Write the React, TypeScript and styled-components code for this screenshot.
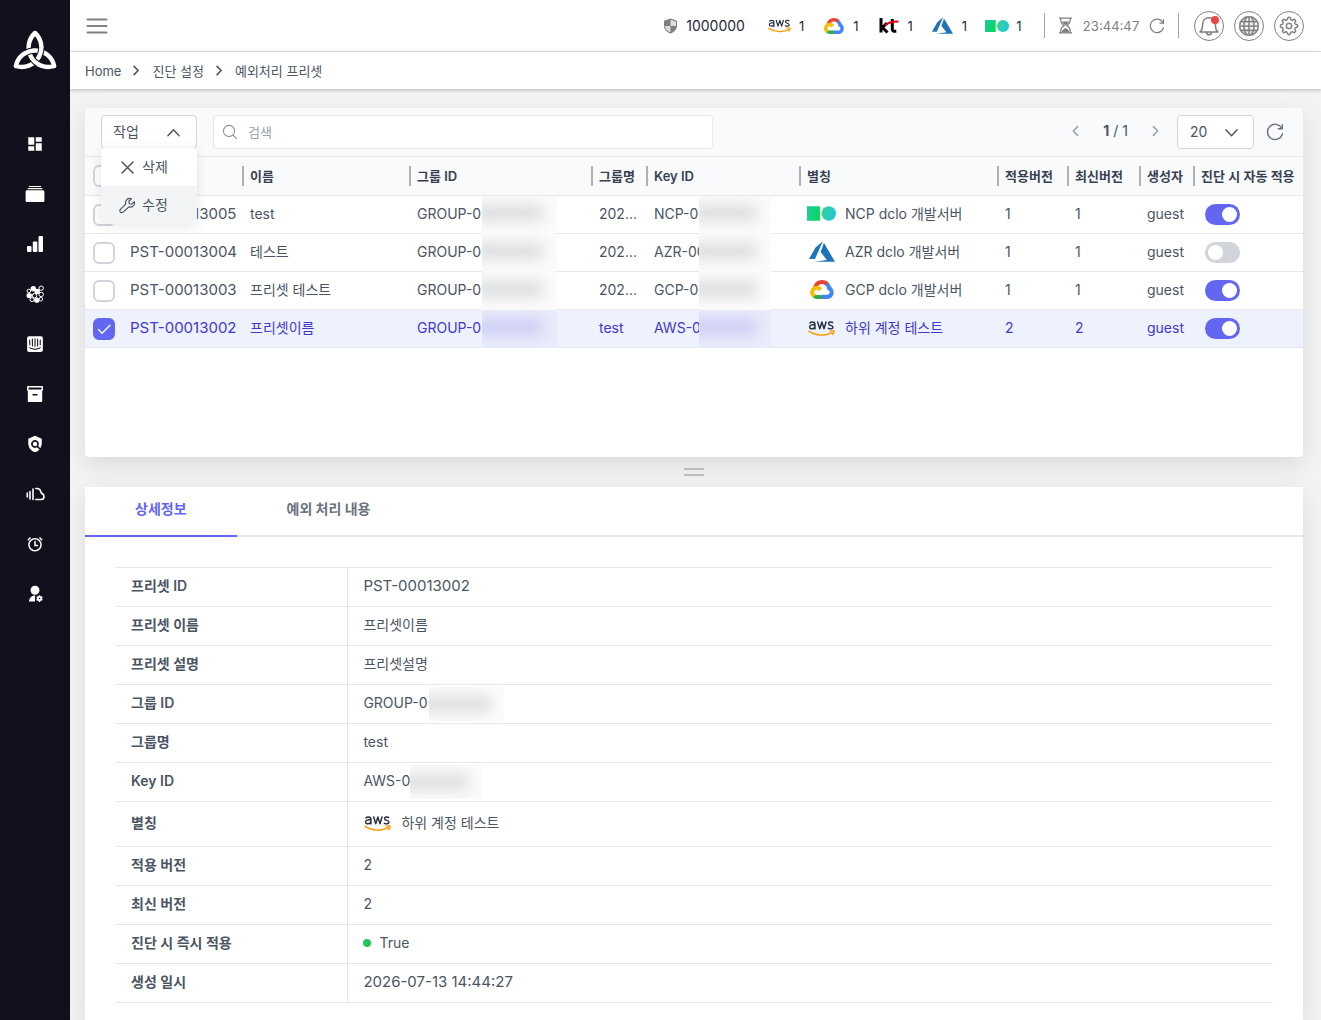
import React from "react";
import styled, { createGlobalStyle, css } from "styled-components";
import { MdDashboard, MdPolicy } from "react-icons/md";
import { IoIosAlbums } from "react-icons/io";
import { RiUserSettingsFill, RiAlarmLine } from "react-icons/ri";
import { FaIntercom } from "react-icons/fa";
import { BsGlobe } from "react-icons/bs";
import { GoGear } from "react-icons/go";

const Global = createGlobalStyle`
  *, *::before, *::after { box-sizing: border-box; }
  body {
    margin: 0;
    background: #f3f3f3;
    color: #4b5563;
    font-family: Inter, "Noto Sans CJK KR", sans-serif;
    font-size: 14px;
    line-height: 20px;
  }
  button, input, select { font: inherit; color: inherit; }
  button { cursor: pointer; }
`;

/* ---------- layout ---------- */

const Shell = styled.div`
  display: flex;
  min-height: 100vh;
`;

const Sidebar = styled.aside`
  flex: 0 0 70px;
  background: #11101d;
  color: #fff;
  display: flex;
  flex-direction: column;
  align-items: center;
  padding-top: 27px;
  gap: 46px;
`;

const Menu = styled.nav`
  display: flex;
  flex-direction: column;
`;

const MenuLink = styled.a`
  display: grid;
  place-items: center;
  width: 50px;
  height: 50px;
  color: #fff;
`;

const Main = styled.main`
  flex: 1;
  min-width: 0;
  display: flex;
  flex-direction: column;
`;

const TopBar = styled.header`
  height: 52px;
  background: #fff;
  border-bottom: 1px solid #e5e7eb;
  display: flex;
  align-items: center;
  justify-content: space-between;
  padding: 0 17px 0 15px;
`;

const PlainButton = styled.button`
  display: grid;
  place-items: center;
  border: 0;
  padding: 0;
  background: none;
  color: ${(p) => p.color || "#6b7280"};
`;

const TopRight = styled.div`
  display: flex;
  align-items: center;
  color: #1f2937;
`;

const Credits = styled.div`
  display: flex;
  align-items: center;
  gap: 8px;
  margin-right: 23px;
`;

const Providers = styled.ul`
  display: flex;
  gap: 18px;
  list-style: none;
  margin: 0;
  padding: 0;
  font-size: 13px;
`;

const Provider = styled.li`
  display: flex;
  align-items: center;
  gap: 7px;
`;

const IconSlot = styled.span<{ $w: number }>`
  display: flex;
  align-items: center;
  justify-content: center;
  width: ${(p) => p.$w}px;
  height: 20px;
`;

const Session = styled.div`
  display: flex;
  align-items: center;
  gap: 9px;
  height: 25px;
  margin: 0 15px 0 23px;
  padding: 0 13px;
  border: solid #9ca3af;
  border-width: 0 1px;
  color: #808080;
  font-size: 13px;
  font-variant-numeric: tabular-nums;
`;

const RoundButtons = styled.div`
  display: flex;
  gap: 10px;
`;

const RoundButton = styled.button`
  position: relative;
  display: grid;
  place-items: center;
  width: 30px;
  height: 30px;
  padding: 0;
  border: 1px solid #808080;
  border-radius: 50%;
  background: #fff;
  color: #808080;
`;

const Dot = styled.span`
  position: absolute;
  top: 4px;
  right: 4px;
  width: 8px;
  height: 8px;
  border-radius: 50%;
  background: #ef4444;
`;

const Crumbs = styled.nav`
  display: flex;
  align-items: center;
  gap: 9px;
  height: 37px;
  padding: 0 15px;
  background: #fff;
  box-shadow: 0 1px 4px rgba(0, 0, 0, 0.25);
  font-size: 13px;
`;

const Crumb = styled.a`
  color: #4b5563;
  text-decoration: none;
`;

const Content = styled.div`
  flex: 1;
  display: flex;
  flex-direction: column;
  padding: 19px 18px 0 15px;
`;

const Card = styled.section`
  background: #fff;
  box-shadow: 0 8px 24px rgba(0, 0, 0, 0.1);
`;

const ListCard = styled(Card)`
  min-height: 349px;
  border-radius: 0 0 4px 4px;
`;

const DetailCard = styled(Card)`
  flex: 1;
`;

const Splitter = styled.div`
  display: grid;
  place-items: center;
  height: 30px;
`;

const Grip = styled.span`
  width: 20px;
  height: 8px;
  border: solid #bdbdbd;
  border-width: 2px 0;
`;

/* ---------- toolbar ---------- */

const Toolbar = styled.div`
  display: flex;
  align-items: center;
  justify-content: space-between;
  height: 49px;
  padding: 0 19px 0 16px;
  background: #f9fafb;
  border-bottom: 1px solid #e5e7eb;
`;

const ToolGroup = styled.div<{ $gap: number }>`
  display: flex;
  align-items: center;
  gap: ${(p) => p.$gap}px;
`;

const field = css`
  height: 34px;
  border: 1px solid #d1d5db;
  border-radius: 4px;
  background: #fff;
`;

const ActionWrap = styled.div`
  position: relative;
`;

const ActionButton = styled.button`
  ${field}
  display: flex;
  align-items: center;
  justify-content: space-between;
  width: 96px;
  padding: 0 15px 0 11px;
`;

const ActionMenu = styled.div`
  position: absolute;
  z-index: 2;
  top: 33px;
  left: 0;
  width: 96px;
  background: #fff;
  border-radius: 4px;
  box-shadow: 0 2px 12px rgba(0, 0, 0, 0.1);
`;

const ActionItem = styled.button<{ $active?: boolean }>`
  display: flex;
  align-items: center;
  gap: 6px;
  width: 100%;
  height: 38px;
  padding: 0 18px;
  border: 0;
  background: ${(p) => (p.$active ? "#f3f4f6" : "transparent")};
`;

const Search = styled.label`
  ${field}
  display: flex;
  align-items: center;
  gap: 10px;
  width: 500px;
  padding: 0 8px;
  border-color: #e5e7eb;
  color: #8b919c;
`;

const SearchInput = styled.input`
  flex: 1;
  min-width: 0;
  border: 0;
  outline: 0;
  padding: 0;
  background: none;
  font-size: 13px;
  &::placeholder { color: #9ca3af; opacity: 1; }
`;

const Pager = styled.div`
  display: flex;
  align-items: center;
  gap: 21px;
  padding: 0 2px 2px 0;
`;

const SelectWrap = styled.div`
  ${field}
  display: grid;
  grid-template-columns: 1fr 44px;
  align-items: center;
  justify-items: center;
  width: 77px;
  & > svg { grid-area: 1 / 2; pointer-events: none; }
`;

const PageSize = styled.select`
  grid-area: 1 / 1 / 2 / 3;
  width: 100%;
  height: 100%;
  appearance: none;
  border: 0;
  padding: 0 12px;
  background: none;
`;

/* ---------- list ---------- */

const List = styled.table`
  width: 100%;
  table-layout: fixed;
  border-collapse: separate;
  border-spacing: 0;
`;

const HeadCell = styled.th<{ $rule?: boolean }>`
  height: 39px;
  padding: 0;
  background: #f9fafb;
  border-bottom: 1px solid #e5e7eb;
  color: #374151;
  font-size: 13px;
  font-weight: 600;
  text-align: left;
  white-space: nowrap;
  & > span {
    display: block;
    padding-left: 6px;
    border-left: 2px solid ${(p) => (p.$rule ? "#b0b0b0" : "transparent")};
  }
`;

const Row = styled.tr<{ $selected?: boolean }>`
  background: ${(p) => (p.$selected ? "#eef2ff" : "#fff")};
  color: ${(p) => (p.$selected ? "#4338ca" : "#4b5563")};
`;

const Cell = styled.td`
  height: 38px;
  padding: 0 0 2px 8px;
  border-bottom: 1px solid #e5e7eb;
  white-space: nowrap;
`;

const ControlCell = styled(Cell)`
  padding-bottom: 0;
`;

const Serial = styled.span`
  font-size: 15px;
`;

const Inline = styled.div<{ $gap?: number }>`
  display: flex;
  align-items: center;
  gap: ${(p) => p.$gap || 0}px;
`;

const Lead = styled.span<{ $w: number }>`
  width: ${(p) => p.$w}px;
  overflow: hidden;
  white-space: nowrap;
`;

const Masked = styled.span<{ $w: number; $h: number; $selected?: boolean }>`
  width: ${(p) => p.$w}px;
  height: ${(p) => p.$h}px;
  margin-bottom: -3px;
  overflow: hidden;
  background: ${(p) => (p.$selected ? "#e9ecfb" : "#fbfbfb")};
  &::before {
    content: "";
    display: block;
    height: 16px;
    margin: 9px 14px 0 -8px;
    background: ${(p) => (p.$selected ? "#cdcdf4" : "#dcdddf")};
    filter: blur(7px);
  }
`;

const Check = styled.input`
  appearance: none;
  display: block;
  width: 22px;
  height: 22px;
  margin: 0;
  border: 2px solid #d1d5db;
  border-radius: 6px;
  background: #fff;
  &:checked {
    border-color: #6366f1;
    background: #6366f1;
  }
`;

const CheckWrap = styled.label`
  display: inline-grid;
  vertical-align: middle;
  place-items: center;
  & > * { grid-area: 1 / 1; }
  & > svg { color: #fff; pointer-events: none; }
`;

const Switch = styled.input`
  appearance: none;
  display: block;
  width: 35px;
  height: 21px;
  margin: 0 0 0 4px;
  padding: 3px;
  border-radius: 11px;
  background: #d1d5db;
  &::before {
    content: "";
    display: block;
    width: 15px;
    height: 15px;
    border-radius: 50%;
    background: #fff;
  }
  &:checked { background: #6366f1; }
  &:checked::before { margin-left: 14px; }
`;

/* ---------- detail ---------- */

const Tabs = styled.div`
  display: flex;
  height: 50px;
  border-bottom: 2px solid #e5e7eb;
`;

const Tab = styled.button<{ $active?: boolean }>`
  height: 50px;
  padding: 0 50px 4px;
  border: 0;
  border-bottom: 2px solid ${(p) => (p.$active ? "#6366f1" : "transparent")};
  background: none;
  color: ${(p) => (p.$active ? "#6366f1" : "#6b7280")};
  font-weight: 700;
`;

const DetailBody = styled.div`
  padding: 30px 30px 16px 31px;
`;

const Details = styled.table`
  width: 100%;
  border-collapse: separate;
  border-spacing: 0;
  border-top: 1px solid #e5e7eb;
`;

const Term = styled.th`
  width: 20%;
  height: 39px;
  padding: 0 15px 3px;
  border-bottom: 1px solid #e5e7eb;
  font-weight: 600;
  text-align: left;
`;

const Value = styled.td<{ $tall?: boolean }>`
  height: ${(p) => (p.$tall ? 45 : 39)}px;
  padding: 0 15px 3px;
  border-bottom: 1px solid #e5e7eb;
  border-left: 1px solid #e5e7eb;
`;

const Bullet = styled.span`
  width: 8px;
  height: 8px;
  border-radius: 50%;
  background: #22c55e;
`;

/* ---------- drawings ---------- */

const Chevron = ({ dir, size = 16, stroke = 1.5 }: { dir: "up" | "down" | "left" | "right"; size?: number; stroke?: number }) => {
  const d = { up: "M2 11.5 8 5l6 6.5", down: "M2 5l6 6.5L14 5", left: "M11 3 6 8l5 5", right: "M5 3l5 5-5 5" }[dir];
  return (
    <svg width={size} height={size} viewBox="0 0 16 16" fill="none" stroke="currentColor" strokeWidth={stroke} strokeLinecap="round" strokeLinejoin="round">
      <path d={d} />
    </svg>
  );
};

const Reload = ({ size }: { size: number }) => (
  <svg width={size} height={size} viewBox="0 0 18 18" fill="none" stroke="currentColor" strokeWidth="1.4" strokeLinecap="round">
    <path d="M15.6 5A7.6 7.6 0 1 0 16.4 11M16.3 1.7v4h-4" />
  </svg>
);

/* Three interlaced arcs; each passes over its neighbour at the first crossing. */
const knot = [
  "M23 6A19.500 19.500 0 0 1 3.900 39",
  "M3.900 39A19.500 19.500 0 0 1 42.100 39",
  "M42.100 39A19.500 19.500 0 0 1 23 6",
];

const Logo = () => (
  <svg width="46" height="46" viewBox="0 0 46 46" fill="none" stroke="#fff" strokeWidth="4.400" strokeLinejoin="round" strokeLinecap="round">
    {knot.map((d) => <path key={d} d={d} />)}
    {knot.map((d) => (
      <g key={d} strokeLinecap="butt">
        <path d={d} pathLength={100} strokeDasharray="0 31 16 53" stroke="#11101d" strokeWidth="6.400" />
        <path d={d} pathLength={100} strokeDasharray="0 30 18 52" />
      </g>
    ))}
  </svg>
);

const Bars = () => (
  <svg width="18" height="18" viewBox="0 0 18 18" fill="currentColor">
    <rect x="1" y="11" width="4.5" height="6" rx="1" />
    <rect x="6.8" y="6.5" width="4.5" height="10.5" rx="1" />
    <rect x="12.5" y="1" width="4.5" height="16" rx="1" />
  </svg>
);

const Molecule = () => (
  <svg width="18" height="18" viewBox="0 0 18 18" fill="none" stroke="currentColor" strokeWidth="1">
    <path d="M4 5l4-1 4 3 3-4M4 10l4-1 4-2 3 3-1 4-4 1-5-1-1-4" />
    <g fill="#11101d">
      <circle cx="15.200" cy="3.200" r="2.200" />
      <circle cx="2.800" cy="6" r="1.800" />
      <circle cx="15.200" cy="9.500" r="2.200" />
      <circle cx="8.600" cy="10.700" r="2.200" />
      <circle cx="6" cy="14.600" r="2" />
      <circle cx="14.800" cy="14.200" r="1.800" />
    </g>
    <g fill="currentColor" stroke="none">
      <circle cx="7.300" cy="3.800" r="2.700" />
      <circle cx="3.200" cy="10.600" r="2.700" />
      <circle cx="11.200" cy="6.400" r="2.700" />
      <circle cx="10.800" cy="15.200" r="2.600" />
    </g>
  </svg>
);

const CloudBars = () => (
  <svg width="19" height="14" viewBox="0 0 19 14" fill="none" stroke="currentColor" strokeWidth="1.600" strokeLinecap="round" strokeLinejoin="round">
    <path d="M1.300 6v4M4 4.500v7.500M7 2v10.500" />
    <path d="M9.800 1.500c3.200-.4 5 1.500 5.400 4.500 1.800.8 2.800 2.200 2.800 3.700 0 1.800-1.200 2.800-2.800 2.800H9.800" />
  </svg>
);

const ArchiveBox = () => (
  <svg width="18" height="18" viewBox="0 0 18 18" fill="currentColor" fillRule="evenodd">
    <path d="M2 1h14a1 1 0 0 1 1 1v3.5h-.8V16a1 1 0 0 1-1 1H2.800a1 1 0 0 1-1-1V5.500H1V2a1 1 0 0 1 1-1zM2.500 2.500v2h13v-2zM6.500 9v1.500h5V9z" />
  </svg>
);

const Shield = () => (
  <svg width="15" height="16" viewBox="0 0 15 16" fill="#808080" fillRule="evenodd">
    <path d="M7.500.5 14 2.800v4.700c0 3.800-2.700 6.600-6.500 8-3.800-1.400-6.500-4.200-6.500-8V2.800zM7.800 2v6h4.900V3.700zM7.200 8H2.300c.2 2.800 2 4.900 4.900 6.100z" />
    <path d="M7.800 2v6h4.900V3.700zM7.200 8H2.300c.2 2.800 2 4.900 4.900 6.100z" fill="#dcdcdc" />
  </svg>
);

const Hourglass = () => (
  <svg width="15" height="17" viewBox="0 0 15 17" fill="none" stroke="currentColor" strokeWidth="1.3">
    <path d="M1 1.200h13M1 15.800h13M2.700 1.500c0 4 .8 5 3.500 7-2.700 2-3.500 3-3.500 7M12.300 1.500c0 4-.8 5-3.500 7 2.700 2 3.500 3 3.500 7" />
    <path d="M4 4.500h7c-.5 1.700-2 2.700-3.500 4-1.500-1.300-3-2.300-3.500-4zM3.500 15.500c.3-2 2-3.500 4-4.500 2 1 3.700 2.500 4 4.500z" fill="currentColor" stroke="none" />
  </svg>
);

const Bell = () => (
  <svg width="22" height="22" viewBox="0 0 22 22" fill="none" stroke="currentColor" strokeWidth="1.600" strokeLinejoin="round" strokeLinecap="round">
    <path d="M2 17c2.200-1.500 2.600-3 2.600-7.500 0-4 2.700-6.700 6.400-6.700s6.400 2.700 6.400 6.700c0 4.500.4 6 2.600 7.500zM8.500 17.500c.3 1.500 1.200 2.200 2.500 2.200s2.200-.7 2.500-2.200" />
  </svg>
);

const Aws = ({ size = 23 }: { size?: number }) => (
  <svg width={size} height={Math.round((size * 2) / 3)} viewBox="0 0 28 18" fill="none">
    <g stroke="#252f3e" strokeWidth="1.500" strokeLinecap="round" strokeLinejoin="round">
      <path d="M2 3.700c.7-.7 1.600-1 2.600-1 1.700 0 2.600.8 2.600 2.400V10M7.200 5.900c-3.200-.5-5.500 0-5.500 2.100 0 2.600 4.500 2.500 5.500-.3" />
      <path d="M10 2.800 12.200 9.700 14.400 2.800 16.600 9.700 18.700 2.800" />
      <path d="M25.600 3.300c-1.700-.9-4.300-.7-4.300 1.200 0 2.200 4.600 1.300 4.600 3.600 0 2-3 2.200-4.800 1.200" />
    </g>
    <path d="M1 12.500c7.500 5 17 5 24 1.300M23 12.300c2-.6 3.700-.6 4 0 .2.700-.4 2.200-1.500 3.500" stroke="#f90" strokeWidth="1.500" strokeLinecap="round" />
  </svg>
);

const Gcp = ({ size = 20 }: { size?: number }) => (
  <svg width={size} height={Math.round(size * 0.8)} viewBox="0 0 256 206">
    <path fill="#ea4335" d="M170.300 56.800l22.200-22.200 1.500-9.400C153.500-11.700 89-7.500 52.500 33.900 42.300 45.400 34.800 59.700 30.800 74.600l8-1.100 44.400-7.300 3.400-3.500c19.800-21.700 53.200-24.600 76-6.100l7.700.2z" />
    <path fill="#4285f4" d="M224.200 73.900a100 100 0 0 0-30.100-48.600l-31.200 31.200c13.200 10.800 20.700 27 20.400 44v5.600c15.300 0 27.700 12.400 27.700 27.700s-12.400 27.400-27.700 27.400h-55.500l-5.500 5.900v33.300l5.500 5.300h55.500c32.300.3 60.100-21.400 68.400-52.500s-4.700-61.900-27.500-79.300z" />
    <path fill="#34a853" d="M71.900 205.800h55.400v-44.400H71.900c-4 0-7.900-.9-11.500-2.500l-8 2.500-22.300 22.100-1.900 7.500c12.500 9.500 27.900 14.800 43.700 14.800z" />
    <path fill="#fbbc05" d="M71.900 61.400c-31 .2-58.500 20-68.500 49.400s-.1 61.500 24.700 80.200l32.200-32.100c-14-6.300-20.200-22.800-13.900-36.700s22.800-20.200 36.700-13.900c6.200 2.800 11.100 7.700 13.900 13.900l32.200-32.200C115.500 72.100 94.300 61.300 71.900 61.400z" />
  </svg>
);

const Kt = () => (
  <svg width="20" height="17" viewBox="0 0 20 17" fill="none">
    <path d="M2 1v14.500M8 6 3.500 10.500 8.500 15.500M13.300 2v10c0 2 1 2.500 4 2.300" stroke="#000" strokeWidth="3" />
    <path d="M6 8.500c3-3.500 8-4 13.500-4" stroke="#e3000f" strokeWidth="2" />
  </svg>
);

const Azure = ({ size = 21 }: { size?: number }) => (
  <svg width={size} height={Math.round(size * 0.8)} viewBox="0 0 96 76" fill="#1f74b8">
    <path d="M51 0 24 23 0 66h22zM55 6 43 40l23 29-45 7h75z" />
  </svg>
);

const Ncp = ({ size = 24 }: { size?: number }) => (
  <svg width={size} height={Math.round(size / 2)} viewBox="0 0 28 14">
    <defs>
      <linearGradient id="ncpA" x1="0" y1="0" x2="1" y2=".4"><stop stopColor="#25c9a0" /><stop offset="1" stopColor="#03d95c" /></linearGradient>
      <linearGradient id="ncpB" x1="0" y1="0" x2="1" y2=".2"><stop stopColor="#38d48a" /><stop offset="1" stopColor="#1fc8d8" /></linearGradient>
    </defs>
    <rect width="12.500" height="14" fill="url(#ncpA)" />
    <ellipse cx="21" cy="7" rx="7" ry="7" fill="url(#ncpB)" />
  </svg>
);

const SearchGlyph = () => (
  <svg width="16" height="16" viewBox="0 0 16 16" fill="none" stroke="currentColor" strokeWidth="1.100" strokeLinecap="round">
    <circle cx="7" cy="7" r="5.600" />
    <path d="m11.300 11.300 3.200 3.200" />
  </svg>
);

const Wrench = () => (
  <svg width="17" height="17" viewBox="0 0 24 24" fill="none" stroke="currentColor" strokeWidth="1.700" strokeLinejoin="round">
    <path d="M21.500 6.500 18 10l-3.500-.5L14 6l3.500-3.500c-3-1.200-6 0-7.500 2.500-1 1.700-1 3.500-.5 5L2 17.500c-1 1.200-1 2.700 0 3.800 1.200 1.200 2.700 1 3.800 0L14 14c2 .6 4 .4 5.500-1 2-1.500 3-4 2-6.500z" />
  </svg>
);

/* ---------- data ---------- */

type Vendor = "ncp" | "azure" | "gcp" | "aws";

const vendorIcon: Record<Vendor, React.ReactNode> = {
  ncp: <Ncp size={29} />,
  azure: <Azure size={26} />,
  gcp: <Gcp size={24} />,
  aws: <Aws size={27} />,
};

interface Preset {
  id: string;
  name: string;
  group: string;
  key: string;
  vendor: Vendor;
  alias: string;
  version: number;
  auto: boolean;
  selected?: boolean;
}

const presets: Preset[] = [
  { id: "PST-00013005", name: "test", group: "202...", key: "NCP-0", vendor: "ncp", alias: "NCP dclo 개발서버", version: 1, auto: true },
  { id: "PST-00013004", name: "테스트", group: "202...", key: "AZR-00", vendor: "azure", alias: "AZR dclo 개발서버", version: 1, auto: false },
  { id: "PST-00013003", name: "프리셋 테스트", group: "202...", key: "GCP-0", vendor: "gcp", alias: "GCP dclo 개발서버", version: 1, auto: true },
  { id: "PST-00013002", name: "프리셋이름", group: "test", key: "AWS-0", vendor: "aws", alias: "하위 계정 테스트", version: 2, auto: true, selected: true },
];

const columns: [string, number][] = [
  ["ID", 120],
  ["이름", 167],
  ["그룹 ID", 182],
  ["그룹명", 55],
  ["Key ID", 153],
  ["별칭", 198],
  ["적용버전", 70],
  ["최신버전", 72],
  ["생성자", 54],
  ["진단 시 자동 적용", 110],
];

const menu: [string, React.ReactNode][] = [
  ["대시보드", <MdDashboard size={18} />],
  ["자산", <IoIosAlbums size={20} />],
  ["통계", <Bars />],
  ["토폴로지", <Molecule />],
  ["컴플라이언스", <FaIntercom size={18} />],
  ["보관함", <ArchiveBox />],
  ["진단 설정", <MdPolicy size={18} />],
  ["클라우드", <CloudBars />],
  ["알림", <RiAlarmLine size={18} />],
  ["사용자 관리", <RiUserSettingsFill size={18} />],
];

const details: { term: string; value: React.ReactNode; tall?: boolean }[] = [
  { term: "프리셋 ID", value: <Serial>PST-00013002</Serial> },
  { term: "프리셋 이름", value: "프리셋이름" },
  { term: "프리셋 설명", value: "프리셋설명" },
  { term: "그룹 ID", value: <Inline><Lead $w={66}>GROUP-0</Lead><Masked $w={75} $h={34} /></Inline> },
  { term: "그룹명", value: "test" },
  { term: "Key ID", value: <Inline><Lead $w={47}>AWS-0</Lead><Masked $w={72} $h={34} /></Inline> },
  { term: "별칭", value: <Inline $gap={9}><IconSlot $w={29}>{vendorIcon.aws}</IconSlot>하위 계정 테스트</Inline>, tall: true },
  { term: "적용 버전", value: "2" },
  { term: "최신 버전", value: "2" },
  { term: "진단 시 즉시 적용", value: <Inline $gap={8}><Bullet />True</Inline> },
  { term: "생성 일시", value: <Serial>2026-07-13 14:44:27</Serial> },
];

const CheckBox = ({ label, checked }: { label: string; checked?: boolean }) => (
  <CheckWrap>
    <Check type="checkbox" aria-label={label} defaultChecked={checked} />
    {checked && (
      <svg width="16" height="16" viewBox="0 0 16 16" fill="none" stroke="currentColor" strokeWidth="1.300" strokeLinecap="round">
        <path d="m2.500 8.500 3.500 3.700 8-8" />
      </svg>
    )}
  </CheckWrap>
);

export default function App() {
  return (
    <>
      <Global />
      <Shell>
        <Sidebar>
          <Logo />
          <Menu aria-label="주 메뉴">
            {menu.map(([label, icon]) => (
              <MenuLink key={label} href="#" aria-label={label}>{icon}</MenuLink>
            ))}
          </Menu>
        </Sidebar>
        <Main>
          <TopBar>
            <PlainButton aria-label="메뉴 열기" color="#808080">
              <svg width="24" height="18" viewBox="0 0 24 18" stroke="currentColor" strokeWidth="2" strokeLinecap="round">
                <path d="M2.500 2.500h19M2.500 9h19M2.500 15.500h19" />
              </svg>
            </PlainButton>
            <TopRight>
              <Credits><Shield />1000000</Credits>
              <Providers>
                {[<Aws />, <Gcp />, <Kt />, <Azure />, <Ncp />].map((icon, i) => (
                  <Provider key={i}><IconSlot $w={24}>{icon}</IconSlot>1</Provider>
                ))}
              </Providers>
              <Session>
                <Hourglass />
                23:44:47
                <PlainButton aria-label="세션 연장" color="#808080"><Reload size={16} /></PlainButton>
              </Session>
              <RoundButtons>
                <RoundButton aria-label="알림"><Bell /><Dot /></RoundButton>
                <RoundButton aria-label="언어"><BsGlobe size={20} stroke="currentColor" strokeWidth={0.4} /></RoundButton>
                <RoundButton aria-label="설정"><GoGear size={20} stroke="currentColor" strokeWidth={0.3} /></RoundButton>
              </RoundButtons>
            </TopRight>
          </TopBar>
          <Crumbs aria-label="현재 위치">
            <Crumb href="#">Home</Crumb>
            <Chevron dir="right" size={13} stroke={2} />
            <Crumb href="#">진단 설정</Crumb>
            <Chevron dir="right" size={13} stroke={2} />
            <Crumb href="#">예외처리 프리셋</Crumb>
          </Crumbs>
          <Content>
            <ListCard>
              <Toolbar>
                <ToolGroup $gap={16}>
                  <ActionWrap>
                    <ActionButton aria-expanded="true">작업<Chevron dir="up" size={15} /></ActionButton>
                    <ActionMenu>
                      <ActionItem>
                        <svg width="17" height="17" viewBox="0 0 17 17" stroke="currentColor" strokeWidth="1.500" strokeLinecap="round">
                          <path d="m3 3 11 11M14 3 3 14" />
                        </svg>
                        삭제
                      </ActionItem>
                      <ActionItem $active><Wrench />수정</ActionItem>
                    </ActionMenu>
                  </ActionWrap>
                  <Search>
                    <SearchGlyph />
                    <SearchInput type="text" placeholder="검색" aria-label="검색" />
                  </Search>
                </ToolGroup>
                <ToolGroup $gap={12}>
                  <Pager>
                    <PlainButton aria-label="이전" color="#9ca3af"><Chevron dir="left" size={14} stroke={1.8} /></PlainButton>
                    <span><b>1</b> / 1</span>
                    <PlainButton aria-label="다음" color="#9ca3af"><Chevron dir="right" size={14} stroke={1.8} /></PlainButton>
                  </Pager>
                  <SelectWrap>
                    <PageSize aria-label="페이지 크기" defaultValue="20">
                      <option>20</option>
                      <option>50</option>
                    </PageSize>
                    <Chevron dir="down" size={15} />
                  </SelectWrap>
                  <PlainButton aria-label="새로고침"><Reload size={18} /></PlainButton>
                </ToolGroup>
              </Toolbar>
              <List>
                <colgroup>
                  <col width={37} />
                  {columns.map(([label, width]) => <col key={label} width={width} />)}
                </colgroup>
                <thead>
                  <tr>
                    <HeadCell><span><CheckBox label="전체 선택" /></span></HeadCell>
                    {columns.map(([label], i) => (
                      <HeadCell key={label} $rule={i > 0}><span>{label}</span></HeadCell>
                    ))}
                  </tr>
                </thead>
                <tbody>
                  {presets.map((p) => (
                    <Row key={p.id} $selected={p.selected}>
                      <ControlCell><CheckBox label={p.id} checked={p.selected} /></ControlCell>
                      <Cell><Serial>{p.id}</Serial></Cell>
                      <Cell>{p.name}</Cell>
                      <Cell><Inline><Lead $w={65}>GROUP-0</Lead><Masked $w={75} $h={38} $selected={p.selected} /></Inline></Cell>
                      <Cell>{p.group}</Cell>
                      <Cell><Inline><Lead $w={45}>{p.key}</Lead><Masked $w={72} $h={38} $selected={p.selected} /></Inline></Cell>
                      <Cell><Inline $gap={9}><IconSlot $w={29}>{vendorIcon[p.vendor]}</IconSlot>{p.alias}</Inline></Cell>
                      <Cell>{p.version}</Cell>
                      <Cell>{p.version}</Cell>
                      <Cell>guest</Cell>
                      <ControlCell><Switch type="checkbox" role="switch" aria-label={`${p.id} 자동 적용`} defaultChecked={p.auto} /></ControlCell>
                    </Row>
                  ))}
                </tbody>
              </List>
            </ListCard>
            <Splitter><Grip /></Splitter>
            <DetailCard>
              <Tabs role="tablist">
                <Tab role="tab" aria-selected="true" $active>상세정보</Tab>
                <Tab role="tab" aria-selected="false">예외 처리 내용</Tab>
              </Tabs>
              <DetailBody>
                <Details>
                  <tbody>
                    {details.map((d) => (
                      <tr key={d.term}>
                        <Term scope="row">{d.term}</Term>
                        <Value $tall={d.tall}>{d.value}</Value>
                      </tr>
                    ))}
                  </tbody>
                </Details>
              </DetailBody>
            </DetailCard>
          </Content>
        </Main>
      </Shell>
    </>
  );
}
